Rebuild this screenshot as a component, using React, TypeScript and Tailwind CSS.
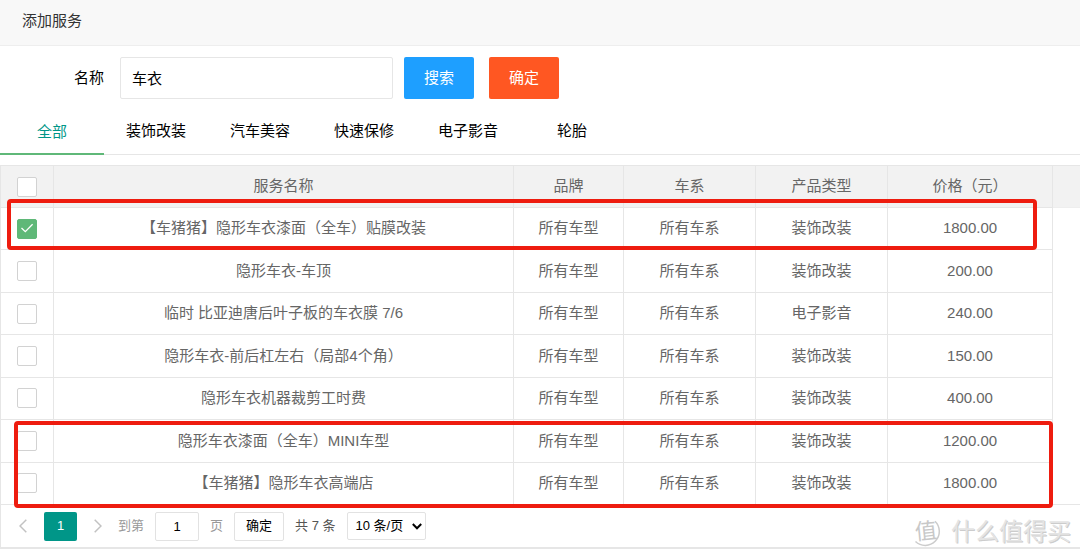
import React from "react";

const tabs = ["全部", "装饰改装", "汽车美容", "快速保修", "电子影音", "轮胎"];

const rows = [
  { name: "【车猪猪】隐形车衣漆面（全车）贴膜改装", type: "装饰改装", price: "1800.00", checked: true },
  { name: "隐形车衣-车顶", type: "装饰改装", price: "200.00" },
  { name: "临时 比亚迪唐后叶子板的车衣膜 7/6", type: "电子影音", price: "240.00" },
  { name: "隐形车衣-前后杠左右（局部4个角）", type: "装饰改装", price: "150.00" },
  { name: "隐形车衣机器裁剪工时费", type: "装饰改装", price: "400.00" },
  { name: "隐形车衣漆面（全车）MINI车型", type: "装饰改装", price: "1200.00" },
  { name: "【车猪猪】隐形车衣高端店", type: "装饰改装", price: "1800.00" },
];

const cell = "border-r border-b border-[#e6e6e6] p-0 text-center font-normal whitespace-nowrap";

function Check({ label, checked = false }: { label: string; checked?: boolean }) {
  return (
    <span className="grid place-items-center">
      <input
        type="checkbox"
        aria-label={label}
        defaultChecked={checked}
        className="peer col-start-1 row-start-1 size-5 appearance-none rounded-xs border border-[#d2d2d2] bg-white checked:border-[#5fb878] checked:bg-[#5fb878]"
      />
      <svg
        viewBox="0 0 20 20"
        className="pointer-events-none invisible col-start-1 row-start-1 size-5 peer-checked:visible"
        fill="none"
        stroke="white"
        strokeWidth="1.3"
      >
        <path d="M4.5 9 8.3 12.7 15.6 5.3" />
      </svg>
    </span>
  );
}

function Chevron({ d }: { d: string }) {
  return (
    <svg viewBox="0 0 8 14" className="h-3.5 w-2" fill="none" stroke="#c2c2c2" strokeWidth="1.5">
      <path d={d} />
    </svg>
  );
}

export default function App() {
  return (
    <div className="bg-white font-['Liberation_Sans','Noto_Sans_CJK_SC',sans-serif] text-[15px] text-black">
      <header className="flex h-[46px] items-center border-b border-[#eeeeee] bg-[#f8f8f8] px-[22px] pb-0.5 text-[#333333]">
        <h1>添加服务</h1>
      </header>

      <form className="flex items-center pt-[11px]" onSubmit={(e) => e.preventDefault()}>
        <label htmlFor="name" className="w-[104px] text-right">名称</label>
        <input
          id="name"
          defaultValue="车衣"
          className="ml-4 h-[42px] w-[273px] rounded-xs border border-[#e6e6e6] px-[11px] pb-0.5"
        />
        <button className="ml-[11px] h-[42px] w-[70px] rounded-xs bg-[#1e9fff] text-white">搜索</button>
        <button type="button" className="ml-[15px] h-[42px] w-[70px] rounded-xs bg-[#ff5722] text-white">确定</button>
      </form>

      <nav className="flex h-[56px] border-b border-[#e6e6e6]">
        {tabs.map((tab, i) => (
          <a
            key={tab}
            href="#"
            className={
              i === 0
                ? "-mb-px flex w-[104px] items-center justify-center border-b-2 border-[#5fb878] pt-3 text-[#009688]"
                : "flex w-[104px] items-center justify-center pt-2.5"
            }
          >
            {tab}
          </a>
        ))}
      </nav>

      <section className="relative mt-2.5 border-t border-b-2 border-l border-[#e6e6e6] text-[#666666]">
        <table className="h-[339px] w-full table-fixed border-separate border-spacing-0">
          <colgroup>
            <col className="w-[53px]" />
            <col />
            <col className="w-[110px]" />
            <col className="w-[132px]" />
            <col className="w-[132px]" />
            <col className="w-[165px]" />
            <col className="w-[27px]" />
          </colgroup>
          <thead>
            <tr className="h-[42px] bg-[#f2f2f2]">
              <th className={cell}><Check label="全选" /></th>
              <th className={cell}>服务名称</th>
              <th className={cell}>品牌</th>
              <th className={cell}>车系</th>
              <th className={cell}>产品类型</th>
              <th className={cell}>价格（元）</th>
              <td className="border-b border-[#eeeeee] p-0" />
            </tr>
          </thead>
          <tbody>
            {rows.map((row) => (
              <tr key={row.name} className="group">
                <td className={cell}><Check label={row.name} checked={row.checked} /></td>
                <td className={cell}>{row.name}</td>
                <td className={cell}>所有车型</td>
                <td className={cell}>所有车系</td>
                <td className={cell}>{row.type}</td>
                <td className={cell}>{row.price}</td>
                <td className="border-[#e6e6e6] p-0 group-last:border-b" />
              </tr>
            ))}
          </tbody>
        </table>
        <div className="pointer-events-none absolute top-[33px] right-[43px] left-1.5 h-[51px] rounded-sm border-4 border-[#ee1c0f]" />
        <div className="pointer-events-none absolute top-[255px] right-[27px] left-[13px] h-[87px] rounded-sm border-4 border-[#ee1c0f]" />

        <footer className="flex h-[42px] items-center text-[13px] text-[#999999]">
          <button aria-label="上一页" className="ml-[18px]"><Chevron d="M7.3.7 1 7l6.3 6.3" /></button>
          <button className="ml-[17px] h-[29px] w-[33px] rounded-xs bg-[#009688] text-white">1</button>
          <button aria-label="下一页" className="ml-[17px]"><Chevron d="M.7.7 7 7 .7 13.3" /></button>
          <label htmlFor="page" className="ml-4">到第</label>
          <input
            id="page"
            defaultValue="1"
            className="ml-[11px] h-[29px] w-11 rounded-xs border border-[#e2e2e2] text-center text-black"
          />
          <span className="ml-[11px]">页</span>
          <button className="ml-[11px] h-[29px] w-[50px] rounded-xs border border-[#e2e2e2] text-black">确定</button>
          <span className="ml-[11px] text-[#555555]">共 7 条</span>
          <span className="ml-[11px] grid items-center">
            <select
              aria-label="每页条数"
              className="col-start-1 row-start-1 h-7 w-[79px] appearance-none rounded-xs border border-[#e2e2e2] pl-2 text-black"
            >
              <option>10 条/页</option>
            </select>
            <svg
              viewBox="0 0 10 7"
              className="pointer-events-none col-start-1 row-start-1 mr-1 h-[7px] w-2.5 justify-self-end"
              fill="none"
              stroke="black"
              strokeWidth="2"
            >
              <path d="M.8 1 5 5.3 9.2 1" />
            </svg>
          </span>
        </footer>

        <div className="pointer-events-none absolute right-[9px] bottom-0 flex items-center gap-2.5 text-2xl leading-none text-[#e4e4e4] [text-shadow:1px_1px_0_#cccccc]">
          <span className="relative flex size-[30px] items-center justify-center text-[22px] text-[#c8c8c8] [text-shadow:none]">
            <svg viewBox="0 0 30 30" className="absolute size-[30px]" fill="none" stroke="#cccccc" strokeWidth="1.5">
              <path d="M24 4.2A14 14 0 0 1 4.5 24.5" />
            </svg>
            <span className="-rotate-6">值</span>
          </span>
          <span>什么值得买</span>
        </div>
      </section>
    </div>
  );
}
